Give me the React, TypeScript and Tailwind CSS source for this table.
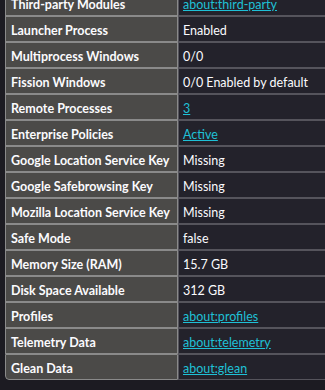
import React from "react";

type Row = { k: string; v: string; link?: boolean };

const rows: Row[] = [
  { k: "Third-party Modules", v: "about:third-party", link: true },
  { k: "Launcher Process", v: "Enabled" },
  { k: "Multiprocess Windows", v: "0/0" },
  { k: "Fission Windows", v: "0/0 Enabled by default" },
  { k: "Remote Processes", v: "3", link: true },
  { k: "Enterprise Policies", v: "Active", link: true },
  { k: "Google Location Service Key", v: "Missing" },
  { k: "Google Safebrowsing Key", v: "Missing" },
  { k: "Mozilla Location Service Key", v: "Missing" },
  { k: "Safe Mode", v: "false" },
  { k: "Memory Size (RAM)", v: "15.7 GB" },
  { k: "Disk Space Available", v: "312 GB" },
  { k: "Profiles", v: "about:profiles", link: true },
  { k: "Telemetry Data", v: "about:telemetry", link: true },
  { k: "Glean Data", v: "about:glean", link: true },
];

export default function App() {
  return (
    <div
      className="w-[325px] h-[390px] overflow-hidden bg-[#1c1b22] text-[#fbfbfe] text-[12.5px]"
      style={{ fontFamily: 'Lato, "Noto Sans", sans-serif' }}
    >
      <div className="ml-[5px] -mt-[10px] w-[340px] rounded-bl-[4px] overflow-hidden">
        {rows.map((r, i) => (
          <div key={i} className="grid grid-cols-[173px_1fr] h-[26px]">
            <div
              className={`bg-[#4b4a48] border border-[#8a8a8a] flex items-center pl-[5px] pt-[4px] font-bold whitespace-nowrap ${
                i === rows.length - 1 ? "rounded-bl-[4px]" : ""
              }`}
            >
              {r.k}
            </div>
            <div className="bg-[#23222b] border border-[#55545c] flex items-center pl-[4px] pt-[4px] whitespace-nowrap">
              {r.link ? (
                <span className="text-[#1fc0d6] underline">{r.v}</span>
              ) : (
                <span>{r.v}</span>
              )}
            </div>
          </div>
        ))}
      </div>
    </div>
  );
}
